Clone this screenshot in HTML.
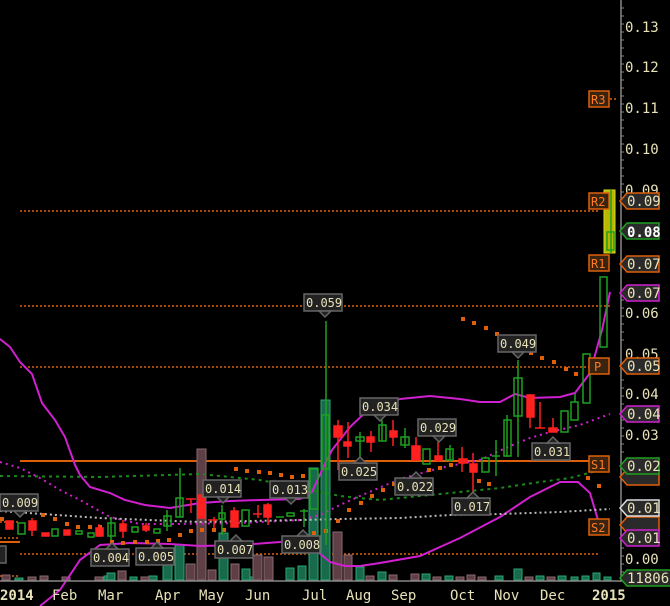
<!DOCTYPE html>
<html><head><meta charset="utf-8"><style>
html,body{margin:0;padding:0;background:#000;width:670px;height:606px;overflow:hidden}
svg{display:block}
text{font-family:"DejaVu Sans Mono","Liberation Mono",monospace}
</style></head><body>
<svg width="670" height="606" viewBox="0 0 670 606" xmlns="http://www.w3.org/2000/svg">
<rect width="670" height="606" fill="#000"/>

<!-- orange horizontal pivot lines -->
<g stroke="#e0600a" stroke-width="1.5" stroke-dasharray="2,2">
<line x1="20" y1="211" x2="600" y2="211"/>
<line x1="20" y1="306" x2="610" y2="306"/>
<line x1="20" y1="367" x2="600" y2="367"/>
<line x1="20" y1="554" x2="600" y2="554"/>
<line x1="0" y1="522" x2="18" y2="522"/>
<line x1="0" y1="538" x2="18" y2="538"/>
<line x1="0" y1="576" x2="18" y2="576"/>
<line x1="590" y1="99" x2="618" y2="99"/>
</g>
<line x1="20" y1="461" x2="600" y2="461" stroke="#e0600a" stroke-width="2"/>
<line x1="0" y1="542" x2="20" y2="542" stroke="#e0600a" stroke-width="2"/>

<!-- volume -->
<g fill="#176b4c" stroke="#2aa775" stroke-width="1">
<rect x="15" y="578" width="8" height="2"/><rect x="104" y="576" width="8" height="4"/>
<rect x="107" y="573" width="8" height="7"/><rect x="130" y="577" width="7" height="3"/>
<rect x="149" y="576" width="8" height="4"/><rect x="163" y="563" width="9" height="17"/>
<rect x="175" y="545" width="9" height="35"/><rect x="219" y="533" width="9" height="47"/>
<rect x="242" y="569" width="8" height="11"/><rect x="286" y="568" width="8" height="12"/>
<rect x="298" y="566" width="8" height="14"/><rect x="309" y="468" width="9" height="112"/>
<rect x="321" y="400" width="9" height="180"/><rect x="356" y="567" width="8" height="13"/>
<rect x="378" y="572" width="8" height="8"/><rect x="422" y="574" width="8" height="6"/>
<rect x="445" y="576" width="8" height="4"/><rect x="495" y="576" width="8" height="4"/>
<rect x="514" y="569" width="8" height="11"/><rect x="536" y="576" width="8" height="4"/>
<rect x="558" y="576" width="8" height="4"/><rect x="571" y="577" width="7" height="3"/>
<rect x="582" y="576" width="7" height="4"/><rect x="593" y="573" width="7" height="7"/>
<rect x="604" y="577" width="7" height="3"/><rect x="250" y="577" width="8" height="3"/>
</g>
<g fill="#5e3f45" stroke="#8a6a70" stroke-width="1">
<rect x="2" y="575" width="8" height="5"/><rect x="28" y="577" width="8" height="3"/>
<rect x="40" y="576" width="8" height="4"/><rect x="62" y="577" width="8" height="3"/>
<rect x="95" y="577" width="8" height="3"/><rect x="118" y="571" width="8" height="9"/>
<rect x="141" y="577" width="8" height="3"/><rect x="186" y="564" width="9" height="16"/>
<rect x="197" y="449" width="9" height="131"/><rect x="208" y="570" width="8" height="10"/>
<rect x="231" y="564" width="8" height="16"/><rect x="253" y="555" width="9" height="25"/>
<rect x="264" y="557" width="9" height="23"/><rect x="333" y="532" width="9" height="48"/>
<rect x="344" y="555" width="8" height="25"/><rect x="366" y="576" width="8" height="4"/>
<rect x="389" y="575" width="8" height="5"/><rect x="411" y="574" width="8" height="6"/>
<rect x="433" y="577" width="8" height="3"/><rect x="456" y="577" width="8" height="3"/>
<rect x="467" y="575" width="8" height="5"/><rect x="478" y="577" width="8" height="3"/>
<rect x="525" y="577" width="8" height="3"/><rect x="547" y="577" width="8" height="3"/>
</g>

<!-- indicator lines -->
<polyline fill="none" stroke="#d020d0" stroke-width="2" points="0,339 10,347 20,362 32,374 42,403 55,420 65,437 75,465 80,475 90,487 110,493 125,500 145,505 170,508 200,503 230,501 260,500 300,499 312,492 322,470 332,450 350,427 370,408 400,399 430,396 460,399 480,402 500,402 515,394 530,398 560,397 575,393 590,373 602,330 610,292"/>
<polyline fill="none" stroke="#d020d0" stroke-width="2" points="40,606 60,590 80,560 100,545 130,543 170,544 200,546 240,545 280,542 305,539 318,552 330,562 345,566 360,566 380,563 420,556 460,538 500,517 530,497 560,482 578,482 590,493 598,520 602,528"/>
<polyline fill="none" stroke="#d020d0" stroke-width="2" stroke-dasharray="2,4" points="0,462 20,468 40,478 60,490 80,500 110,517 140,524 180,524 240,523 300,520 320,515 340,505 360,496 400,479 440,468 480,460 510,446 530,438 550,432 580,425 610,414"/>
<polyline fill="none" stroke="#1a8a1a" stroke-width="2" stroke-dasharray="3,4" points="0,476 100,477 200,474 260,480 300,488 340,496 380,500 440,494 500,488 540,482 570,478 600,470"/>
<polyline fill="none" stroke="#bbb" stroke-width="2" stroke-dasharray="2,3" points="0,511 100,518 200,522 300,520 340,519 400,518 450,515 500,514 560,512 610,509"/>

<!-- SAR dots -->
<g fill="#e0600a">
<rect x="0" y="517" width="4" height="4"/><rect x="8" y="496" width="4" height="4"/>
<rect x="41" y="513" width="4" height="4"/><rect x="53" y="517" width="4" height="4"/><rect x="65" y="522" width="4" height="4"/><rect x="76" y="525" width="4" height="4"/><rect x="88" y="525" width="4" height="4"/><rect x="98" y="525" width="4" height="4"/>
<rect x="110" y="540" width="4" height="4"/><rect x="121" y="541" width="4" height="4"/><rect x="133" y="540" width="4" height="4"/><rect x="145" y="540" width="4" height="4"/><rect x="156" y="539" width="4" height="4"/><rect x="167" y="538" width="4" height="4"/><rect x="178" y="533" width="4" height="4"/><rect x="189" y="529" width="4" height="4"/><rect x="200" y="528" width="4" height="4"/><rect x="212" y="528" width="4" height="4"/><rect x="222" y="528" width="4" height="4"/>
<rect x="234" y="467" width="4" height="4"/><rect x="245" y="469" width="4" height="4"/><rect x="257" y="470" width="4" height="4"/><rect x="268" y="471" width="4" height="4"/><rect x="279" y="473" width="4" height="4"/><rect x="290" y="475" width="4" height="4"/><rect x="301" y="474" width="4" height="4"/><rect x="312" y="531" width="4" height="4"/><rect x="324" y="529" width="4" height="4"/>
<rect x="336" y="519" width="4" height="4"/><rect x="347" y="508" width="4" height="4"/><rect x="359" y="501" width="4" height="4"/><rect x="370" y="494" width="4" height="4"/><rect x="381" y="488" width="4" height="4"/><rect x="392" y="482" width="4" height="4"/><rect x="404" y="478" width="4" height="4"/><rect x="415" y="474" width="4" height="4"/><rect x="427" y="468" width="4" height="4"/><rect x="438" y="466" width="4" height="4"/><rect x="449" y="463" width="4" height="4"/>
<rect x="461" y="317" width="4" height="4"/><rect x="472" y="321" width="4" height="4"/><rect x="484" y="326" width="4" height="4"/><rect x="495" y="332" width="4" height="4"/><rect x="529" y="351" width="4" height="4"/><rect x="540" y="356" width="4" height="4"/><rect x="552" y="360" width="4" height="4"/><rect x="564" y="367" width="4" height="4"/><rect x="574" y="372" width="4" height="4"/>
<rect x="586" y="476" width="4" height="4"/><rect x="597" y="484" width="4" height="4"/><rect x="487" y="482" width="4" height="4"/><rect x="477" y="479" width="4" height="4"/>
</g>

<!-- candles -->
<g stroke-width="1.5">
<!-- green (hollow) -->
<g stroke="#1fa01f" fill="none">
<rect x="18" y="523" width="7" height="11"/><rect x="52" y="529" width="6" height="7"/><rect x="76" y="531" width="6" height="3"/><rect x="88" y="533" width="6" height="4"/>
<rect x="108" y="523" width="7" height="13"/><line x1="111" y1="517" x2="111" y2="540"/>
<rect x="132" y="527" width="6" height="5"/><rect x="154" y="529" width="6" height="4"/>
<rect x="164" y="516" width="7" height="10"/><line x1="167" y1="510" x2="167" y2="531"/>
<rect x="176" y="498" width="7" height="19"/><line x1="180" y1="468" x2="180" y2="517"/>
<rect x="219" y="513" width="6" height="6"/><line x1="222" y1="505" x2="222" y2="535"/>
<rect x="242" y="510" width="7" height="16"/>
<line x1="276" y1="517" x2="284" y2="517"/><rect x="287" y="513" width="7" height="3"/><line x1="300" y1="511" x2="308" y2="511"/><line x1="304" y1="509" x2="304" y2="527"/>
<rect x="310" y="469" width="8" height="40"/>
<rect x="322" y="415" width="7" height="54"/><line x1="326" y1="321" x2="326" y2="545"/>
<rect x="356" y="437" width="8" height="4"/><line x1="360" y1="432" x2="360" y2="458"/>
<rect x="379" y="425" width="7" height="16"/><line x1="382" y1="420" x2="382" y2="441"/>
<rect x="401" y="437" width="8" height="8"/><line x1="405" y1="428" x2="405" y2="448"/>
<rect x="423" y="449" width="7" height="15"/>
<rect x="446" y="449" width="7" height="11"/><line x1="450" y1="445" x2="450" y2="462"/>
<rect x="482" y="458" width="7" height="14"/><line x1="496" y1="440" x2="496" y2="476"/><line x1="492" y1="456" x2="500" y2="456"/>
<rect x="504" y="420" width="7" height="36"/><line x1="507" y1="415" x2="507" y2="457"/>
<rect x="514" y="378" width="8" height="38"/><line x1="518" y1="360" x2="518" y2="457"/>
<rect x="561" y="411" width="7" height="21"/><rect x="571" y="402" width="7" height="18"/><line x1="575" y1="394" x2="575" y2="402"/>
<rect x="583" y="354" width="7" height="49"/>
<rect x="600" y="277" width="7" height="70"/>
</g>
<!-- red -->
<g stroke="#ff2020" fill="#ff2020">
<rect x="6" y="521" width="7" height="8"/><rect x="29" y="521" width="7" height="9"/><line x1="32" y1="518" x2="32" y2="536"/>
<rect x="42" y="533" width="7" height="3"/><rect x="64" y="530" width="6" height="5"/><rect x="96" y="528" width="7" height="8"/><line x1="99" y1="524" x2="99" y2="537"/>
<rect x="120" y="524" width="6" height="7"/><line x1="123" y1="520" x2="123" y2="538"/><rect x="143" y="526" width="6" height="4"/><line x1="146" y1="523" x2="146" y2="532"/>
<line x1="186" y1="499" x2="196" y2="499"/><line x1="191" y1="499" x2="191" y2="513"/>
<rect x="198" y="495" width="7" height="23"/><line x1="214" y1="517" x2="214" y2="528"/><line x1="208" y1="520" x2="218" y2="520"/>
<rect x="231" y="511" width="7" height="16"/><line x1="234" y1="507" x2="234" y2="527"/>
<line x1="253" y1="514" x2="262" y2="514"/><line x1="258" y1="505" x2="258" y2="518"/>
<rect x="264" y="505" width="7" height="12"/><line x1="268" y1="503" x2="268" y2="525"/>
<rect x="334" y="426" width="8" height="11"/><line x1="338" y1="420" x2="338" y2="470"/>
<rect x="344" y="442" width="7" height="4"/><line x1="348" y1="422" x2="348" y2="458"/>
<rect x="367" y="437" width="7" height="5"/><line x1="371" y1="431" x2="371" y2="452"/>
<rect x="390" y="431" width="7" height="6"/><line x1="393" y1="420" x2="393" y2="446"/>
<rect x="412" y="446" width="8" height="14"/><line x1="416" y1="437" x2="416" y2="460"/>
<rect x="435" y="456" width="7" height="4"/><line x1="438" y1="442" x2="438" y2="462"/>
<rect x="459" y="459" width="8" height="4"/><line x1="462" y1="447" x2="462" y2="472"/>
<rect x="470" y="464" width="7" height="8"/><line x1="473" y1="453" x2="473" y2="493"/>
<rect x="527" y="395" width="7" height="22"/><line x1="530" y1="394" x2="530" y2="428"/>
<line x1="535" y1="428" x2="545" y2="428"/><line x1="540" y1="402" x2="540" y2="428"/>
<rect x="549" y="428" width="8" height="4"/><line x1="553" y1="418" x2="553" y2="432"/>
</g>
</g>
<!-- yellow current bar -->
<rect x="604" y="190" width="11" height="63" fill="#b8b800" stroke="#d8d820"/>
<line x1="611" y1="190" x2="611" y2="253" stroke="#1fa01f" stroke-width="1.5"/>
<rect x="607" y="232" width="7" height="18" fill="none" stroke="#1fa01f" stroke-width="1.5"/>

<!-- callout labels -->
<g font-size="12" fill="#e8e2b8">
<g fill="#222" stroke="#666" stroke-width="1.5">
<rect x="0" y="494" width="38" height="17"/><path d="M14,511 L20,517 L26,511Z"/>
<rect x="203" y="480" width="38" height="17"/><path d="M217,497 L223,503 L229,497Z"/>
<rect x="270" y="481" width="38" height="17"/><path d="M285,498 L291,504 L297,498Z"/>
<rect x="304" y="294" width="38" height="17"/><path d="M319,311 L325,317 L331,311Z"/>
<rect x="360" y="398" width="38" height="17"/><path d="M374,415 L380,421 L386,415Z"/>
<rect x="418" y="419" width="38" height="17"/><path d="M433,436 L439,442 L445,436Z"/>
<rect x="498" y="335" width="38" height="17"/><path d="M512,352 L518,358 L524,352Z"/>
<rect x="91" y="549" width="38" height="17"/><path d="M106,549 L112,543 L118,549Z"/>
<rect x="136" y="548" width="38" height="17"/><path d="M151,548 L157,542 L163,548Z"/>
<rect x="215" y="541" width="38" height="17"/><path d="M230,541 L236,535 L242,541Z"/>
<rect x="282" y="536" width="38" height="17"/><path d="M297,536 L303,530 L309,536Z"/>
<rect x="339" y="463" width="38" height="17"/><path d="M354,463 L360,457 L366,463Z"/>
<rect x="395" y="478" width="38" height="17"/><path d="M410,478 L416,472 L422,478Z"/>
<rect x="452" y="498" width="38" height="17"/><path d="M467,498 L473,492 L479,498Z"/>
<rect x="532" y="443" width="38" height="17"/><path d="M547,443 L553,437 L559,443Z"/>
<rect x="-4" y="546" width="10" height="17"/>
</g>
<text x="2" y="507">0.009</text><text x="205" y="493">0.014</text><text x="272" y="494">0.013</text>
<text x="306" y="307">0.059</text><text x="362" y="411">0.034</text><text x="420" y="432">0.029</text>
<text x="500" y="348">0.049</text><text x="93" y="562">0.004</text><text x="138" y="561">0.005</text>
<text x="217" y="554">0.007</text><text x="284" y="549">0.008</text><text x="341" y="476">0.025</text>
<text x="397" y="491">0.022</text><text x="454" y="511">0.017</text><text x="534" y="456">0.031</text>
</g>

<!-- pivot tags -->
<g font-size="12" fill="#ff7a20">
<g fill="#3a2410" stroke="#e0600a" stroke-width="1.5">
<rect x="589" y="91" width="20" height="16"/><rect x="589" y="193" width="20" height="16"/>
<rect x="589" y="255" width="20" height="16"/><rect x="589" y="358" width="20" height="16"/>
<rect x="589" y="456" width="20" height="16"/><rect x="589" y="519" width="20" height="16"/>
</g>
<text x="591" y="104">R3</text><text x="591" y="206">R2</text><text x="591" y="268">R1</text>
<text x="594" y="371">P</text><text x="591" y="469">S1</text><text x="591" y="532">S2</text>
</g>

<!-- right axis -->
<line x1="621" y1="0" x2="621" y2="582" stroke="#888" stroke-width="1.5"/>
<g stroke="#888" stroke-width="1">
<path d="M621,8h3M621,16h3M621,24h3M621,32h3M621,40h3M621,48h3M621,56h3M621,64h3M621,72h3M621,80h3M621,88h3M621,96h3M621,104h3M621,112h3M621,120h3M621,128h3M621,136h3M621,144h3M621,152h3M621,160h3M621,168h3M621,176h3M621,184h3M621,192h3M621,300h3M621,308h3M621,316h3M621,324h3M621,332h3M621,340h3M621,380h3M621,388h3M621,396h3M621,404h3M621,420h3M621,428h3M621,436h3M621,444h3M621,452h3M621,548h3M621,556h3M621,564h3M621,572h3"/>
</g>
<g font-size="14" fill="#e8e2b8" font-family="Liberation Sans, sans-serif">
<text x="625" y="32">0.13</text><text x="625" y="72">0.12</text><text x="625" y="113">0.11</text>
<text x="625" y="154">0.10</text><text x="625" y="195">0.09</text><text x="625" y="318">0.06</text>
<text x="625" y="399">0.04</text><text x="625" y="440">0.03</text><text x="625" y="564">0.00</text>
<text x="625" y="359">0.05</text><text x="625" y="272">0.07</text><text x="625" y="485">0.02</text>
</g>
<!-- value tags -->
<g stroke-width="1.5">
<path d="M620,201 L627,193 L659,193 L659,209 L627,209Z" fill="#2a2a2a" stroke="#e0600a"/>
<path d="M620,231 L627,223 L659,223 L659,239 L627,239Z" fill="#2a2a2a" stroke="#1fa01f"/>
<path d="M620,264 L627,256 L659,256 L659,272 L627,272Z" fill="#2a2a2a" stroke="#e0600a"/>
<path d="M620,293 L627,285 L659,285 L659,301 L627,301Z" fill="#2a2a2a" stroke="#d020d0"/>
<path d="M620,366 L627,358 L659,358 L659,374 L627,374Z" fill="#2a2a2a" stroke="#e0600a"/>
<path d="M620,414 L627,406 L659,406 L659,422 L627,422Z" fill="#2a2a2a" stroke="#d020d0"/>
<path d="M620,477 L627,469 L659,469 L659,485 L627,485Z" fill="#2a2a2a" stroke="#e0600a"/>
<path d="M620,466 L627,458 L659,458 L659,474 L627,474Z" fill="#2a2a2a" stroke="#1fa01f"/>
<path d="M620,525 L627,517 L659,517 L659,533 L627,533Z" fill="#2a2a2a" stroke="#e0600a"/>
<path d="M620,508 L627,500 L659,500 L659,516 L627,516Z" fill="#2a2a2a" stroke="#ddd"/>
<path d="M620,538 L627,530 L659,530 L659,546 L627,546Z" fill="#2a2a2a" stroke="#d020d0"/>
<path d="M620,578 L627,570 L672,570 L672,586 L627,586Z" fill="#2a2a2a" stroke="#1fa01f"/>
</g>
<g font-size="14" fill="#e8e2b8" font-family="Liberation Sans, sans-serif">
<text x="627" y="206">0.09</text><text x="627" y="237" font-weight="bold" fill="#fff">0.08</text>
<text x="627" y="269">0.07</text><text x="627" y="298">0.07</text><text x="627" y="371">0.05</text>
<text x="627" y="419">0.04</text><text x="627" y="471">0.02</text><text x="627" y="513">0.01</text>
<text x="627" y="543">0.01</text><text x="627" y="583">11806</text>
</g>

<!-- bottom axis -->
<line x1="0" y1="581" x2="621" y2="581" stroke="#888" stroke-width="1.5"/>
<g font-size="14" fill="#e8e2b8" font-family="Liberation Sans, sans-serif">
<text x="0" y="600" font-weight="bold">2014</text><text x="52" y="600">Feb</text><text x="98" y="600">Mar</text>
<text x="155" y="600">Apr</text><text x="199" y="600">May</text><text x="245" y="600">Jun</text>
<text x="302" y="600">Jul</text><text x="346" y="600">Aug</text><text x="391" y="600">Sep</text>
<text x="450" y="600">Oct</text><text x="494" y="600">Nov</text><text x="540" y="600">Dec</text>
<text x="592" y="600" font-weight="bold">2015</text>
</g>
</svg>
</body></html>
